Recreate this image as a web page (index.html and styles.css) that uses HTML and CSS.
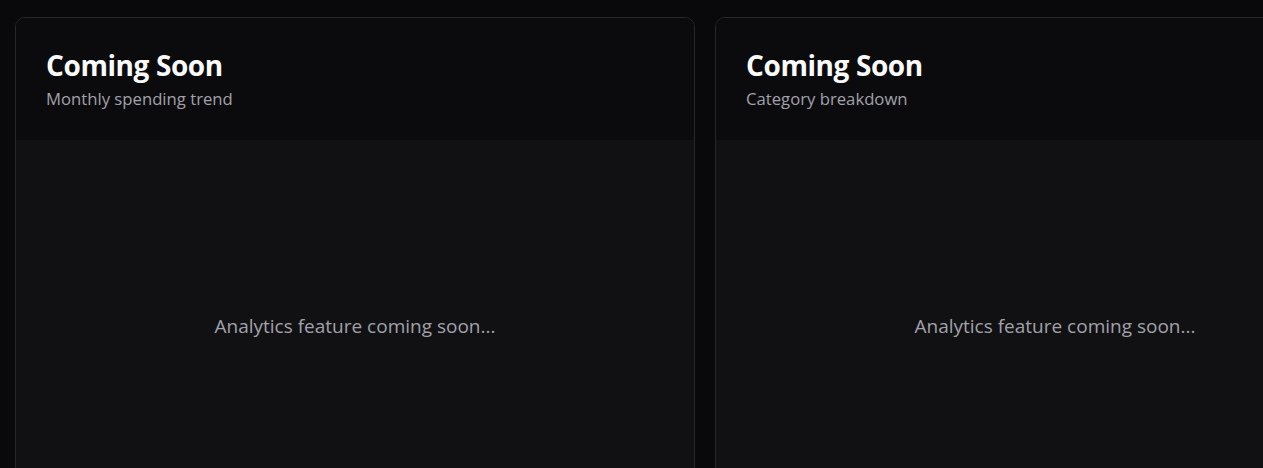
FILE: index.html
```html
<!DOCTYPE html>
<html>
<head>
<meta charset="utf-8">
<link rel="stylesheet" href="styles.css">
</head>
<body>
<main class="grid">
  <section class="card">
    <header class="card-head">
      <h2 class="card-title">Coming Soon</h2>
      <p class="card-sub">Monthly spending trend</p>
    </header>
    <div class="card-body">
      <p class="placeholder">Analytics feature coming soon...</p>
    </div>
  </section>
  <section class="card">
    <header class="card-head">
      <h2 class="card-title">Coming Soon</h2>
      <p class="card-sub">Category breakdown</p>
    </header>
    <div class="card-body">
      <p class="placeholder">Analytics feature coming soon...</p>
    </div>
  </section>
</main>
</body>
</html>
```
FILE: styles.css
```css
html, body {
  margin: 0;
  padding: 0;
  background: #09090b;
  overflow: hidden;
  font-family: "Open Sans", "Noto Sans", sans-serif;
}
.grid {
  display: grid;
  grid-template-columns: 680px 680px;
  gap: 20px;
  padding: 17px 0 0 15px;
}
.card {
  border: 1px solid #27272a;
  border-radius: 10px;
  overflow: hidden;
  background: #0b0b0d;
}
.card-head {
  padding: 28px 30px 0;
  height: 94px;
  background: #0b0b0d;
}
.card-title {
  margin: 0;
  font-size: 28px;
  line-height: 38px;
  font-weight: 700;
  color: #fafafa;
  letter-spacing: -0.4px;
}
.card-sub {
  margin: 3px 0 0;
  font-size: 16.7px;
  line-height: 24px;
  color: #a1a1aa;
}
.card-body {
  height: 372px;
  background: #111113;
  display: flex;
  align-items: center;
  justify-content: center;
}
.placeholder {
  margin: 0;
  font-size: 19px;
  color: #a1a1aa;
}
```
